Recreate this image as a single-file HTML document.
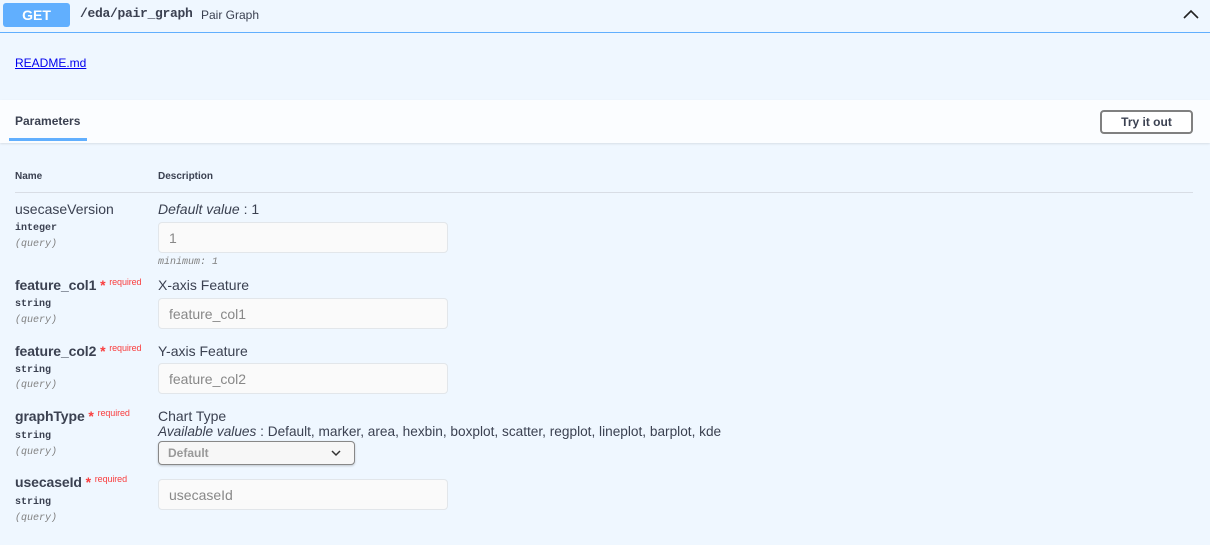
<!DOCTYPE html>
<html><head><style>
*{margin:0;padding:0;box-sizing:border-box}
body{width:1210px;height:545px;background:#eff7ff;font-family:"Liberation Sans",sans-serif;color:#3b4151;position:relative;overflow:hidden}
.a{position:absolute;white-space:nowrap}
.mono{font-family:"Liberation Mono",monospace}
.inp{position:absolute;left:158px;width:290px;height:31px;background:#fafafa;border:1px solid #e2e6ea;border-radius:4px;font-size:14px;color:#888;padding:7px 10px}
.nm{font-size:14px;font-weight:bold;color:#3b4151;letter-spacing:-0.1px}
.req{color:#f93e3e;font-size:9px;font-weight:normal;vertical-align:5px}
.st{color:#f93e3e;font-size:14px}
.ty{font-size:10px;font-weight:bold}
.q{font-size:10px;font-style:italic;color:#808080}
</style></head><body>
<div class="a" style="left:3px;top:3px;width:67px;height:24px;background:#61affe;border-radius:3px;color:#fff;font-weight:bold;font-size:14px;text-align:center;line-height:24px">GET</div>
<div class="a mono" style="left:80px;top:6px;font-size:13px;font-weight:bold;letter-spacing:-0.3px">/eda/pair_graph</div>
<div class="a" style="left:201px;top:8px;font-size:12px">Pair Graph</div>
<svg class="a" style="left:1183px;top:8px" width="16" height="12"><path d="M1 10 L8 3 L15 10" fill="none" stroke="#222" stroke-width="1.6"/></svg>
<div class="a" style="left:0;top:32px;width:1210px;height:1px;background:#61affe"></div>
<div class="a" style="left:15px;top:56px;font-size:12px;color:#0000ee;text-decoration:underline">README.md</div>
<div class="a" style="left:0;top:100px;width:1210px;height:43px;background:#fbfdff;box-shadow:0 1px 2px rgba(0,0,0,.1)"></div>
<div class="a" style="left:15px;top:114px;font-size:12px;font-weight:bold">Parameters</div>
<div class="a" style="left:9px;top:138px;width:78px;height:3px;background:#61affe"></div>
<div class="a" style="left:1100px;top:110px;width:93px;height:24px;border:2px solid #808080;border-radius:4px;font-size:12px;font-weight:bold;text-align:center;line-height:20px;background:#fff">Try it out</div>
<div class="a" style="left:15px;top:171px;font-size:10px;font-weight:bold">Name</div>
<div class="a" style="left:158px;top:171px;font-size:10px;font-weight:bold">Description</div>
<div class="a" style="left:15px;top:192px;width:1178px;height:1px;background:#d8dde5"></div>

<div class="a" style="left:15px;top:201px;font-size:14px">usecaseVersion</div>
<div class="a mono ty" style="left:15px;top:223px">integer</div>
<div class="a mono q" style="left:15px;top:239px">(query)</div>
<div class="a" style="left:158px;top:201px;font-size:14px"><i>Default value</i> : 1</div>
<div class="inp" style="top:222px">1</div>
<div class="a mono q" style="left:158px;top:257px;font-size:10px">minimum: 1</div>

<div class="a nm" style="left:15px;top:277px">feature_col1 <span class="st">*</span> <span class="req">required</span></div>
<div class="a mono ty" style="left:15px;top:299px">string</div>
<div class="a mono q" style="left:15px;top:315px">(query)</div>
<div class="a" style="left:158px;top:277px;font-size:14px">X-axis Feature</div>
<div class="inp" style="top:298px">feature_col1</div>

<div class="a nm" style="left:15px;top:343px">feature_col2 <span class="st">*</span> <span class="req">required</span></div>
<div class="a mono ty" style="left:15px;top:365px">string</div>
<div class="a mono q" style="left:15px;top:380px">(query)</div>
<div class="a" style="left:158px;top:343px;font-size:14px">Y-axis Feature</div>
<div class="inp" style="top:363px">feature_col2</div>

<div class="a nm" style="left:15px;top:408px">graphType <span class="st">*</span> <span class="req">required</span></div>
<div class="a mono ty" style="left:15px;top:431px">string</div>
<div class="a mono q" style="left:15px;top:447px">(query)</div>
<div class="a" style="left:158px;top:408px;font-size:14px">Chart Type</div>
<div class="a" style="left:158px;top:424px;font-size:13.65px"><i>Available values</i> : Default, marker, area, hexbin, boxplot, scatter, regplot, lineplot, barplot, kde</div>
<div class="a" style="left:158px;top:441px;width:197px;height:24px;border:1px solid #888;border-radius:4px;background:#f7f7f7;box-shadow:0 1px 2px rgba(0,0,0,.2);font-size:12px;font-weight:bold;color:#999;padding:4px 9px">Default</div>
<svg class="a" style="left:331px;top:449px" width="10" height="8"><path d="M1 2 L5 6 L9 2" fill="none" stroke="#333" stroke-width="1.5"/></svg>

<div class="a nm" style="left:15px;top:474px">usecaseId <span class="st">*</span> <span class="req">required</span></div>
<div class="a mono ty" style="left:15px;top:497px">string</div>
<div class="a mono q" style="left:15px;top:513px">(query)</div>
<div class="inp" style="top:479px">usecaseId</div>
</body></html>
